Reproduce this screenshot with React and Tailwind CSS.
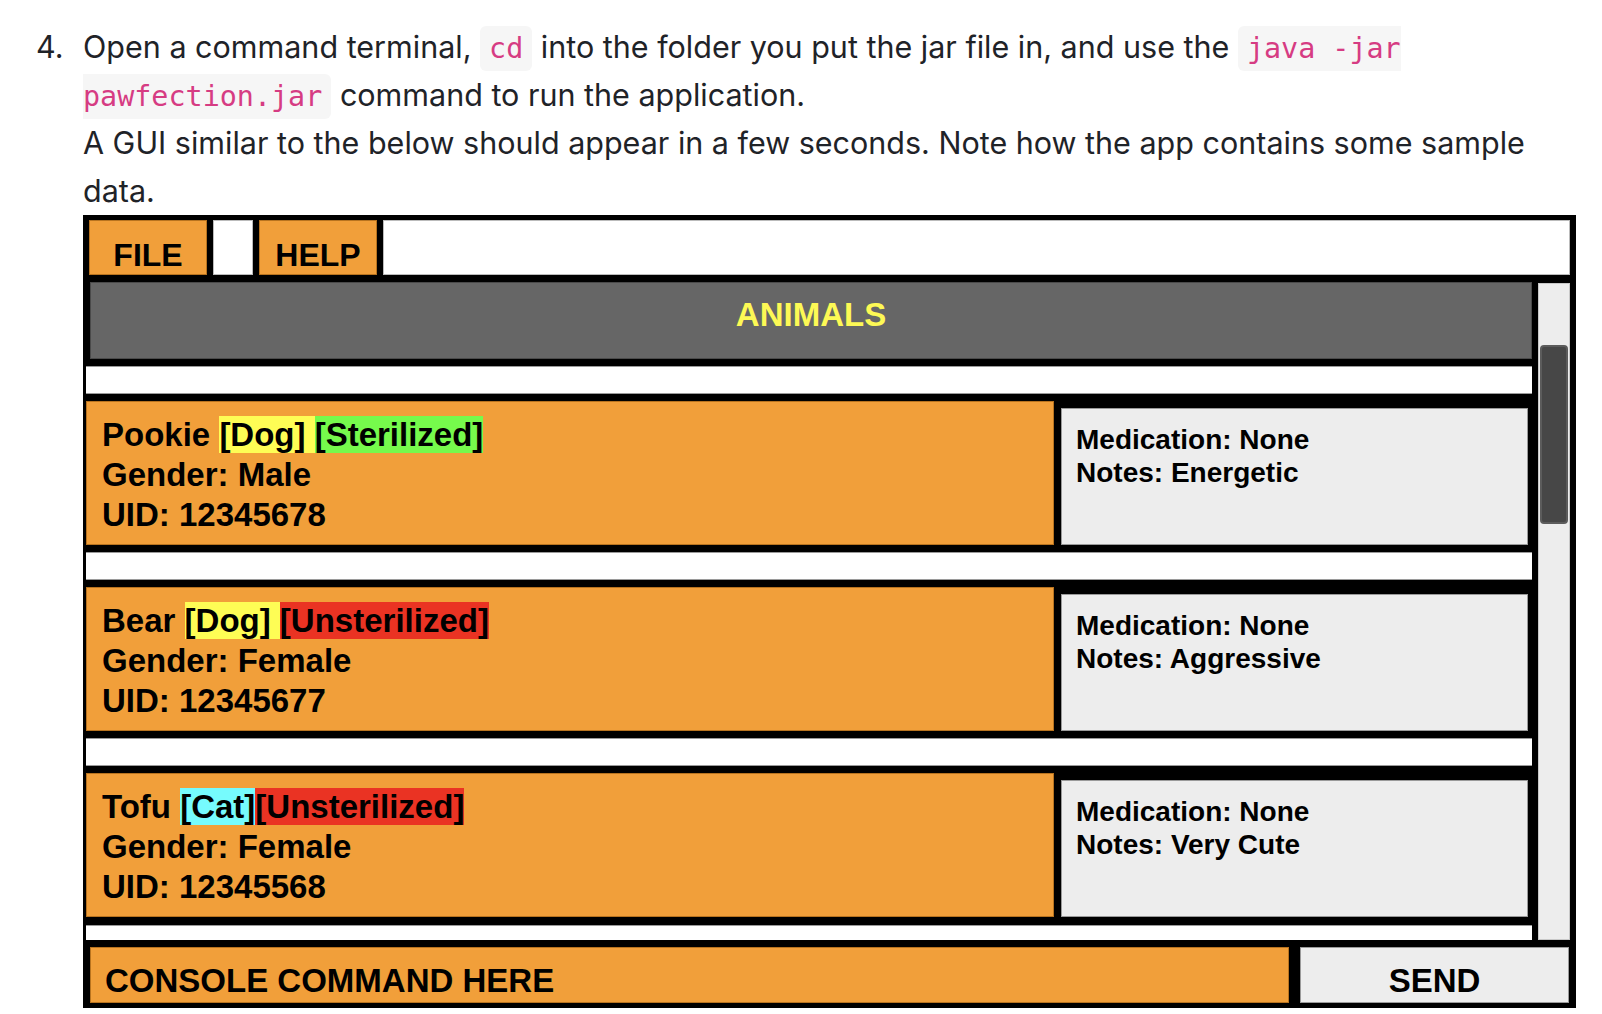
import React from 'react';

const animals = [
  { name: 'Pookie', tags: [['[Dog] ', 'bg-[#fefd55]'], ['[Sterilized]', 'bg-[#76fa4c]']], gender: 'Male', uid: '12345678', notes: 'Energetic' },
  { name: 'Bear', tags: [['[Dog] ', 'bg-[#fefd55]'], ['[Unsterilized]', 'bg-[#ea3323]']], gender: 'Female', uid: '12345677', notes: 'Aggressive' },
  { name: 'Tofu', tags: [['[Cat]', 'bg-[#76fbfd]'], ['[Unsterilized]', 'bg-[#ea3323]']], gender: 'Female', uid: '12345568', notes: 'Very Cute' },
];

function Code({ children }) {
  return (
    <code className="font-['DejaVu_Sans_Mono',monospace] text-[28.4px] leading-none text-[#d63c83] bg-[#f6f6f6] rounded-md px-[9px] py-[6px]">
      {children}
    </code>
  );
}

function AnimalCard({ animal }) {
  return (
    <>
      <div className="h-[28px] shrink-0 mt-[7px] ml-[3px] bg-white border-y border-[#9a9a9a]" />
      <div className="h-[144px] shrink-0 mt-[7px] ml-[3px] flex">
        <div className="w-[968px] bg-[#f19f3a] border border-[#b8731f] pl-[15px] pt-[13px] text-[33px] leading-[40px]">
          <div>
            {animal.name}{' '}
            {animal.tags.map(([label, color], i) => (
              <span key={i} className={color}>{label}</span>
            ))}
          </div>
          <div>Gender: {animal.gender}</div>
          <div>UID: {animal.uid}</div>
        </div>
        <div className="w-[467px] ml-[7px] mt-[7px] bg-[#ededed] border border-[#9a9a9a] pl-[14px] pt-[14px] text-[28px] leading-[33px]">
          <div>Medication: None</div>
          <div>Notes: {animal.notes}</div>
        </div>
      </div>
    </>
  );
}

function AppWindow() {
  return (
    <div className="w-[1493px] h-[793px] bg-black flex flex-col font-['Liberation_Sans',Arial,sans-serif] font-bold text-black">
      <div className="flex gap-[6px] mt-[5px] mx-[6px] h-[55px]">
        <div className="w-[118px] bg-[#f19f3a] border border-[#b8731f] text-center text-[32px] leading-[40px] pt-[14px]">FILE</div>
        <div className="w-[40px] bg-white border border-[#bbbbbb]" />
        <div className="w-[118px] bg-[#f19f3a] border border-[#b8731f] text-center text-[32px] leading-[40px] pt-[14px]">HELP</div>
        <div className="flex-1 bg-white border border-[#bbbbbb]" />
      </div>

      <div className="flex mt-[7px] h-[658px]">
        <div className="w-[1449px] flex flex-col overflow-hidden">
          <div className="h-[77px] shrink-0 ml-[7px] bg-[#666666] border border-[#4a4a4a] text-center text-[33px] leading-[40px] pt-[12px] text-[#fdf955]">
            ANIMALS
          </div>
          {animals.map((a) => (
            <AnimalCard key={a.uid} animal={a} />
          ))}
          <div className="h-[28px] shrink-0 mt-[8px] ml-[3px] bg-white border-y border-[#9a9a9a]" />
        </div>
        <div className="ml-[6px] mt-[1px] w-[32px] bg-[#ededed] border border-[#c8c8c8] pt-[61px] px-[1px]">
          <div className="h-[179px] rounded-[4px] bg-[#474747] border-2 border-[#5c5c5c]" />
        </div>
      </div>

      <div className="flex mt-[7px] h-[56px] ml-[7px]">
        <div className="w-[1199px] bg-[#f19f3a] border border-[#b8731f] pl-[14px] pt-[13px] text-[33px] leading-[40px]">
          CONSOLE COMMAND HERE
        </div>
        <div className="w-[269px] ml-[11px] bg-[#ededed] border border-[#9a9a9a] text-center pt-[13px] text-[33px] leading-[40px]">
          SEND
        </div>
      </div>
    </div>
  );
}

export default function App() {
  return (
    <div className="min-h-screen bg-white font-['Inter','Noto_Sans',sans-serif] text-[#1f2328]">
      <div className="flex pt-[23px] pl-[36px]">
        <span className="w-[47px] text-[30.5px] leading-[48px]">4.</span>
        <div className="w-[1493px]">
          <p className="text-[30.5px] leading-[48px]">
            Open a command terminal, <Code>cd</Code> into the folder you put the jar file in, and use the{' '}
            <Code>java -jar pawfection.jar</Code> command to run the application.
            <br />
            A GUI similar to the below should appear in a few seconds. Note how the app contains some sample data.
          </p>
          <AppWindow />
        </div>
      </div>
    </div>
  );
}
